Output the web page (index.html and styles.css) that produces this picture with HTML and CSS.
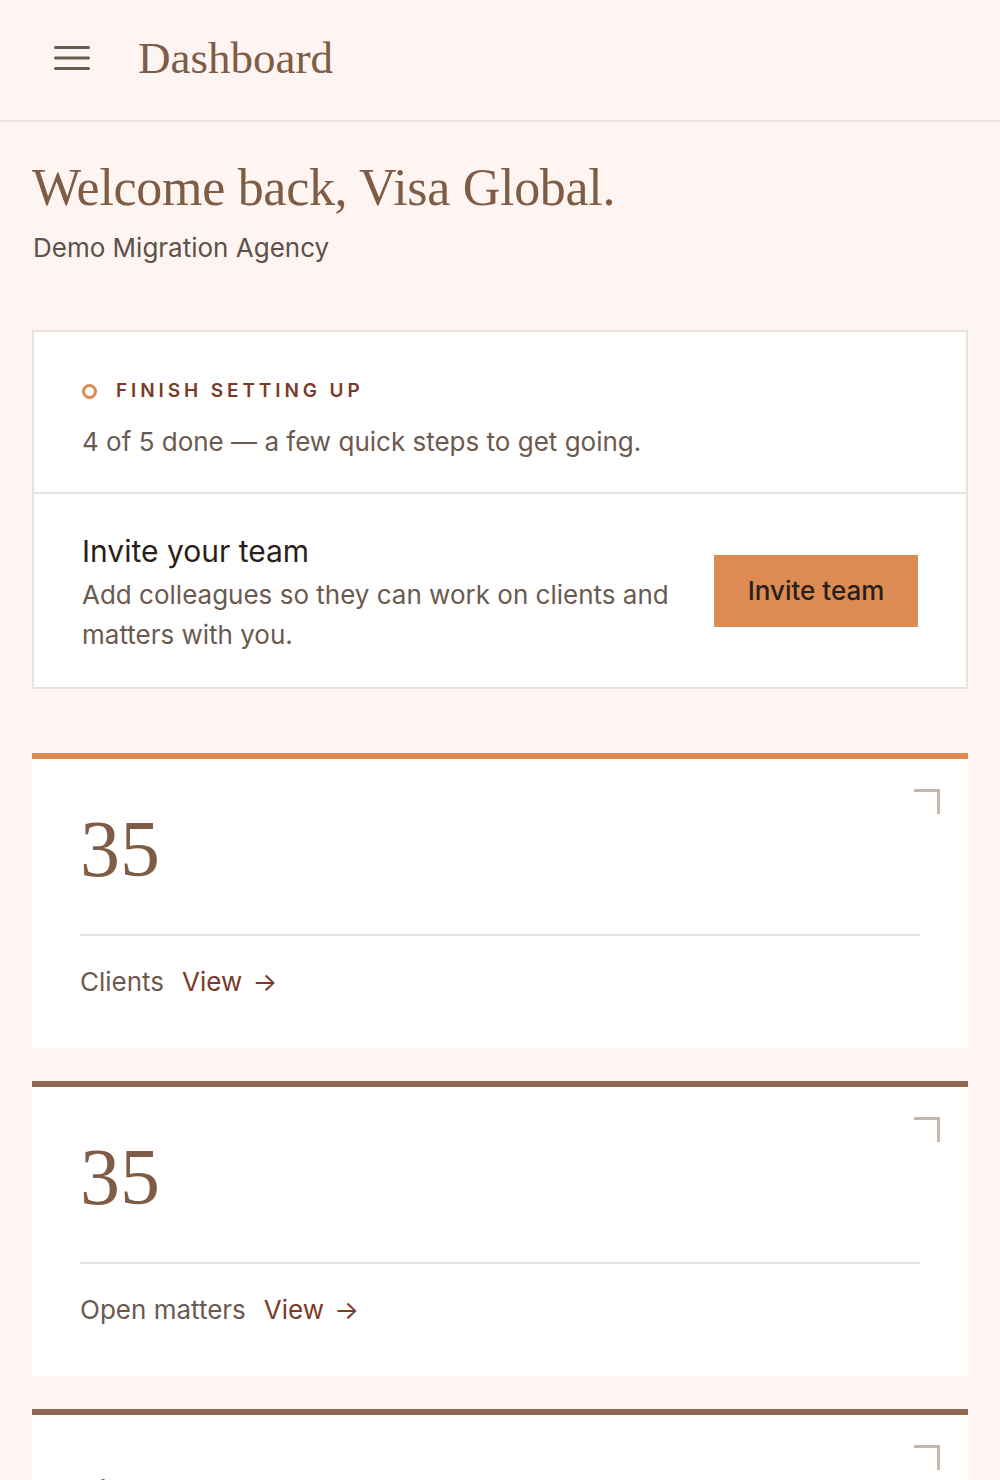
FILE: index.html
```html
<!DOCTYPE html>
<html lang="en">
<head>
<meta charset="utf-8">
<title>Dashboard</title>
<link rel="stylesheet" href="styles.css">
</head>
<body>
<header class="topbar">
  <button class="menu-btn" aria-label="Open menu">
    <svg width="36" height="24" viewBox="0 0 36 24" aria-hidden="true">
      <path d="M1.5 1.5h33M1.5 12h33M1.5 22.5h33" stroke="currentColor" stroke-width="3" stroke-linecap="round" fill="none"/>
    </svg>
  </button>
  <h1 class="topbar-title">Dashboard</h1>
</header>

<main class="page">
  <section class="welcome">
    <h2 class="welcome-title">Welcome back, Visa Global.</h2>
    <p class="welcome-org">Demo Migration Agency</p>
  </section>

  <section class="setup">
    <div class="setup-head">
      <div class="setup-label">
        <span class="ring"></span>
        <span>FINISH SETTING UP</span>
      </div>
      <p class="setup-progress">4 of 5 done — a few quick steps to get going.</p>
    </div>
    <div class="setup-step">
      <div class="step-text">
        <h3 class="step-title">Invite your team</h3>
        <p class="step-desc">Add colleagues so they can work on clients and matters with you.</p>
      </div>
      <button class="btn-primary">Invite team</button>
    </div>
  </section>

  <section class="stats">
    <article class="stat stat-accent">
      <span class="corner"></span>
      <div class="stat-value">35</div>
      <div class="stat-foot">
        <span class="stat-label">Clients</span>
        <a class="stat-link" href="#">View <span class="arrow">→</span></a>
      </div>
    </article>
    <article class="stat stat-brown">
      <span class="corner"></span>
      <div class="stat-value">35</div>
      <div class="stat-foot">
        <span class="stat-label">Open matters</span>
        <a class="stat-link" href="#">View <span class="arrow">→</span></a>
      </div>
    </article>
    <article class="stat stat-brown">
      <span class="corner"></span>
      <div class="stat-value">1</div>
      <div class="stat-foot">
        <span class="stat-label">Pending tasks</span>
        <a class="stat-link" href="#">View <span class="arrow">→</span></a>
      </div>
    </article>
  </section>
</main>
</body>
</html>
```

FILE: styles.css
```css
* {
  box-sizing: border-box;
}

html, body {
  margin: 0;
  padding: 0;
  background: #fef5f2;
}

body {
  font-family: Inter, "Noto Sans", sans-serif;
  color: #6b5a50;
  overflow: hidden;
}

/* top bar */
.topbar {
  height: 122px;
  display: flex;
  align-items: center;
  gap: 48px;
  padding: 0 0 4px 54px;
  border-bottom: 2px solid #e8e2de;
}

.menu-btn {
  border: 0;
  background: none;
  padding: 0;
  color: #6b5a50;
  display: flex;
}

.topbar-title {
  margin: 0;
  font-family: "Liberation Serif", serif;
  font-weight: 400;
  font-size: 45px;
  color: #7f5c45;
}

/* page body */
.page {
  padding: 0 32px;
}

.welcome {
  padding-top: 34px;
}

.welcome-title {
  margin: 0;
  font-family: "Liberation Serif", serif;
  font-weight: 400;
  font-size: 52px;
  line-height: 64px;
  color: #7f5c45;
  letter-spacing: -0.3px;
}

.welcome-org {
  margin: 10px 0 0 1px;
  font-size: 26px;
  line-height: 36px;
  color: #5f5049;
}

/* setup checklist */
.setup {
  margin-top: 64px;
  background: #fff;
  border: 2px solid #e8e2de;
}

.setup-head {
  padding: 46px 48px 32px;
  border-bottom: 2px solid #e8e2de;
}

.setup-label {
  display: flex;
  align-items: center;
  gap: 19px;
  font-size: 19px;
  font-weight: 600;
  letter-spacing: 3.9px;
  color: #7a3b28;
  line-height: 26px;
}

.ring {
  width: 15px;
  height: 15px;
  border: 3px solid #dc8b52;
  border-radius: 50%;
}

.setup-progress {
  margin: 20px 0 0;
  font-size: 26px;
  line-height: 36px;
  color: #6b5a50;
}

.setup-step {
  display: flex;
  align-items: center;
  gap: 36px;
  padding: 38px 48px 32px;
}

.step-text {
  flex: 1;
}

.step-title {
  margin: 0;
  font-size: 30px;
  font-weight: 400;
  line-height: 38px;
  color: #2a1f1a;
}

.step-desc {
  margin: 5px 0 0;
  font-size: 26px;
  line-height: 40px;
  color: #6b5a50;
}

.btn-primary {
  flex: none;
  width: 204px;
  height: 72px;
  border: 0;
  background: #dc8b52;
  color: #2a1f1a;
  font-family: Inter, "Noto Sans", sans-serif;
  font-size: 26px;
  font-weight: 500;
  margin-bottom: 6px;
}

/* stat cards */
.stats {
  margin-top: 64px;
  display: flex;
  flex-direction: column;
  gap: 33px;
}

.stat {
  position: relative;
  background: #fff;
  height: 295px;
  padding: 47px 48px 0;
  border-top: 6px solid #8f6a52;
}

.stat-accent {
  border-top-color: #dc8b52;
}

.corner {
  position: absolute;
  top: 30px;
  right: 28px;
  width: 26px;
  height: 25px;
  border-top: 3px solid #c9b6ab;
  border-right: 3px solid #c9b6ab;
}

.stat-value {
  font-family: "Liberation Serif", serif;
  font-size: 80px;
  line-height: 86px;
  color: #7f5c45;
  height: 130px;
  border-bottom: 2px solid #e8e2de;
}

.stat-foot {
  display: flex;
  align-items: center;
  gap: 18px;
  padding-top: 28px;
  font-size: 26px;
  line-height: 36px;
}

.stat-label {
  color: #6b5a50;
}

.stat-link {
  color: #7a3b28;
  text-decoration: none;
}

.arrow {
  margin-left: 3px;
}
```
